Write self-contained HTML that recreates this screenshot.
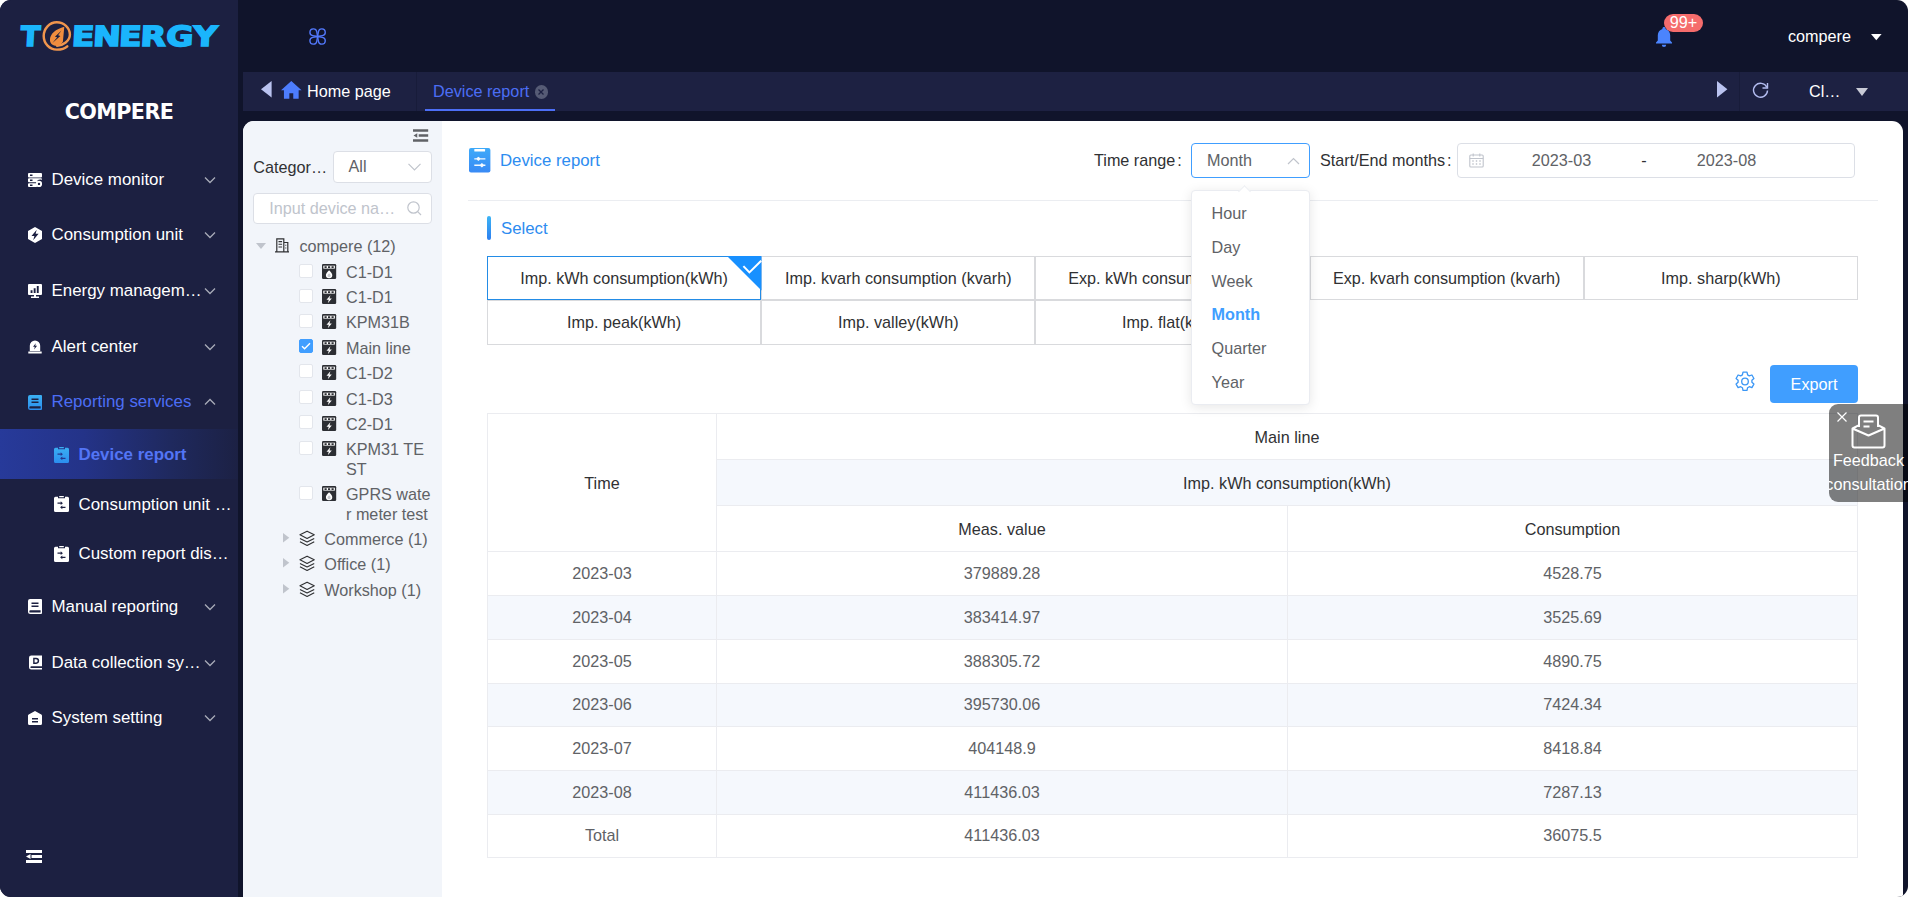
<!DOCTYPE html>
<html lang="en">
<head>
<meta charset="utf-8">
<title>Device report</title>
<style>
*{box-sizing:border-box;margin:0;padding:0}
html,body{width:1908px;height:897px;overflow:hidden;background:#fff}
body{font-family:"Liberation Sans",sans-serif;font-size:16.2px;color:#303133;position:relative}
svg{display:block;overflow:visible}
.abs{position:absolute}
#app{position:absolute;left:0;top:0;width:1908px;height:897px;background:#10142b;border-radius:11px;overflow:hidden}
#side{position:absolute;left:0;top:0;width:238px;height:897px;background:#1c2041}
.mi{position:absolute;left:0;width:238px;height:50px;color:#fff;font-size:16.9px;line-height:50px;white-space:nowrap}
.mi .ic{position:absolute;left:28px;top:18px;width:14px;height:14px}
.mi .tx{position:absolute;left:51.5px;top:0}
.mi .ch{position:absolute;left:204px;top:21px;width:12px;height:8px}
.smi{position:absolute;left:0;width:238px;height:50px;color:#fff;font-size:16.9px;line-height:50px;white-space:nowrap}
.smi .ic{position:absolute;left:54.2px;top:17px;width:15px;height:16px}
.smi .tx{position:absolute;left:78.5px;top:0}
#top{position:absolute;left:238px;top:0;width:1670px;height:72px}
#tabs{position:absolute;left:243px;top:72px;width:1665px;height:39px;background:#1d2142}
#panel{position:absolute;left:243px;top:121px;width:1660px;height:790px;background:#fff;border-radius:11px;overflow:hidden}
#tree{position:absolute;left:0;top:0;width:199px;height:790px;background:#f2f5fa}
#main{position:absolute;left:0;top:0;width:1908px;height:897px}
.tn{position:absolute;font-size:16.2px;color:#606266;white-space:nowrap;line-height:20px}
.cb{position:absolute;width:14px;height:14px;border:1px solid #e3e6ec;border-radius:2px;background:#fff}
.cb.on{background:#409eff;border-color:#409eff}
.dv{position:absolute;width:14.2px;height:15px}
.lay{position:absolute;width:16.2px;height:16.6px}
.car{position:absolute;width:0;height:0;border-left:6.4px solid #c0c4cc;border-top:4.7px solid transparent;border-bottom:4.7px solid transparent}
.opt{position:absolute;height:44px;border:1px solid #d9dadd;font-size:16.2px;color:#303133;text-align:center;line-height:42px;white-space:nowrap;background:#fff}
table{border-collapse:collapse}
#tb{position:absolute;left:487px;top:413px;width:1370px;font-size:16.2px;color:#606266;table-layout:fixed}
#tb td,#tb th{border:1px solid #ebecf0;text-align:center;font-weight:normal;padding:0}
#tb th{height:46px;color:#303133;padding-top:2px}
#tb td{height:auto}
#tb tr.s td,#tb th.s{background:#f5f8fd}
.dd{position:absolute;left:1211.6px;font-size:16.2px;color:#606266;line-height:20px;white-space:nowrap}

</style>
</head>
<body>
<div id="app">
<div id="side">
<svg class="abs" style="left:0;top:0" width="238" height="72" viewBox="0 0 238 72">
<defs><linearGradient id="lg" gradientUnits="userSpaceOnUse" x1="0" y1="25" x2="0" y2="47"><stop offset="0" stop-color="#1bb0f6"/><stop offset="1" stop-color="#1cb4fb"/></linearGradient></defs>
<g font-family="'DejaVu Sans','Liberation Sans',sans-serif" font-weight="bold" font-size="27.71" fill="#1ab5fc" stroke="#1ab5fc" stroke-width="1.6" stroke-linejoin="miter">
<text transform="translate(20.30,46.10) skewX(-3) scale(1.031,1)" x="-0.14" y="0">T</text>
<text transform="translate(0,46.10) skewX(-3) scale(1.2,1)" x="59.36 77.07 98.74 116.71 138.04 160.63" y="0">ENERGY</text>
</g>
<path d="M57 45.800C63 45.500 69.900 41 69.900 34.500A13.100 12.400 0 0 0 56.800 22.300A13.100 13.700 0 0 0 43.700 36A13.100 13.600 0 0 0 56.800 49.600C61 49.600 65 48.500 67.300 46.300" fill="none" stroke="#f0954d" stroke-width="2.450" stroke-linecap="round"/>
<path d="M64.300 26.800C56 29 49.500 34 50 40.500C50.300 44.500 54 46.200 57.500 45.800C60 45.500 61.500 43.800 62.900 41.800z" fill="#f08d3e"/>
<path d="M61.500 30.600L54.900 36.700l2.300.5L52.400 42.900l8-7-2.300-.6z" fill="#1c2041"/>
</svg>
<div class="abs" style="left:0;top:96px;width:238px;text-align:center;color:#fff;font-weight:bold;font-size:22px;line-height:32px;font-family:'DejaVu Sans','Liberation Sans',sans-serif;letter-spacing:-0.6px;transform:scaleX(.94)">COMPERE</div>

<div class="mi" style="top:155px"><svg class="ic" viewBox="0 0 14 14"><path fill="#fff" d="M1 0h12a1 1 0 0 1 1 1v2.500a1 1 0 0 1-1 1H1a1 1 0 0 1-1-1V1a1 1 0 0 1 1-1zm1 1.500v1.500h2.500V1.500zM1 5.200h12a1 1 0 0 1 1 1v.6a4 4 0 0 0-5.500 2.500H1a1 1 0 0 1-1-1V6.200a1 1 0 0 1 1-1zm1 1.400v1.500h2.500V6.600zM1 10.200h7.200a4 4 0 0 0 .8 3.800H1a1 1 0 0 1-1-1v-1.800a1 1 0 0 1 1-1zm1 1.300V13h2.500v-1.500zM11 7.800a3.100 3.100 0 1 1 0 6.200 3.100 3.100 0 0 1 0-6.200zm0 1.900a1.200 1.200 0 1 0 0 2.400 1.200 1.200 0 0 0 0-2.400z"/></svg><span class="tx">Device monitor</span><svg class="ch" viewBox="0 0 12 8"><path d="M1 1.500l5 5 5-5" fill="none" stroke="#a8abb8" stroke-width="1.300"/></svg></div>

<div class="mi" style="top:209.500px"><svg class="ic" viewBox="0 0 14 16" style="height:16px;top:17px"><path fill="#fff" d="M7 0l7 4v8l-7 4-7-4V4zM8.700 2.800L3.500 9h2.900l-1.200 4.300L10.600 6.700H7.600z"/></svg><span class="tx">Consumption unit</span><svg class="ch" viewBox="0 0 12 8"><path d="M1 1.500l5 5 5-5" fill="none" stroke="#a8abb8" stroke-width="1.300"/></svg></div>

<div class="mi" style="top:266px"><svg class="ic" viewBox="0 0 14 14"><path fill="#fff" d="M1 0h12a1 1 0 0 1 1 1v9a1 1 0 0 1-1 1H1a1 1 0 0 1-1-1V1a1 1 0 0 1 1-1zm1.600 6.300v2.700h1.900V6.300zm3.100 -2.100v4.800h1.900V4.200zm3.100-2.100v6.900h1.900V2.100zM6 11h2v1.500h3V14H3v-1.500h3z"/></svg><span class="tx">Energy managem…</span><svg class="ch" viewBox="0 0 12 8"><path d="M1 1.500l5 5 5-5" fill="none" stroke="#a8abb8" stroke-width="1.300"/></svg></div>

<div class="mi" style="top:321.500px"><svg class="ic" viewBox="0 0 14 14"><path fill="#fff" d="M7 .5a5.200 5.200 0 0 1 5.200 5.200V11H1.800V5.700A5.200 5.200 0 0 1 7 .5zm.8 2.700L5 6.800h1.800l-.7 2.700 3-3.700H7.200zM.3 11.600h13.400V13.500H.3z"/></svg><span class="tx">Alert center</span><svg class="ch" viewBox="0 0 12 8"><path d="M1 1.500l5 5 5-5" fill="none" stroke="#a8abb8" stroke-width="1.300"/></svg></div>

<div class="mi" style="top:377px;color:#4c6ef5"><svg class="ic" viewBox="0 0 14 15" style="height:15px;top:17.500px"><defs><linearGradient id="bg1" x1="0" y1="0" x2="0" y2="1"><stop offset="0" stop-color="#3bb0f2"/><stop offset="1" stop-color="#2b8ef0"/></linearGradient></defs><path fill="url(#bg1)" d="M2 0h11a1 1 0 0 1 1 1v13a1 1 0 0 1-1 1H2.500A2.500 2.500 0 0 1 0 12.500V2a2 2 0 0 1 2-2zM3.500 3.500v1.400h7V3.500zm0 3v1.400h7V6.500zM2.500 11.200a1.200 1.200 0 0 0 0 2.400H12.600v-2.400z"/></svg><span class="tx">Reporting services</span><svg class="ch" viewBox="0 0 12 8"><path d="M1 6.500l5-5 5 5" fill="none" stroke="#a8abb8" stroke-width="1.300"/></svg></div>

<div class="abs" style="left:0;top:429px;width:238px;height:50px;background:linear-gradient(90deg,#273a9a 0%,#243388 35%,#1f295e 72%,#1c2144 100%)"></div>
<div class="smi" style="top:430px;color:#5375f6;font-weight:bold"><svg class="ic" viewBox="0 0 15 16"><defs><linearGradient id="bg2" x1="0" y1="0" x2="0" y2="1"><stop offset="0" stop-color="#3bb0f2"/><stop offset="1" stop-color="#2b8ef0"/></linearGradient></defs><path fill="url(#bg2)" d="M1.500 .8H4V2.200h7V.8h2.500A1.500 1.500 0 0 1 15 2.300V14.500A1.500 1.500 0 0 1 13.500 16h-12A1.500 1.500 0 0 1 0 14.500V2.300A1.500 1.500 0 0 1 1.500 .8zM5.200 0h4.600V1.200H5.200zM3.500 6.500v1.300h3.200v1.200l2.200-1.850-2.200-1.850v1.200zm8 4.200H8.300V9.500l-2.200 1.850 2.200 1.850V12h3.200z"/></svg><span class="tx">Device report</span></div>
<div class="smi" style="top:479.500px"><svg class="ic" style="top:16.500px" viewBox="0 0 15 16"><path fill="#fff" d="M1.500 .8H4V2.200h7V.8h2.500A1.500 1.500 0 0 1 15 2.300V14.500A1.500 1.500 0 0 1 13.500 16h-12A1.500 1.500 0 0 1 0 14.500V2.300A1.500 1.500 0 0 1 1.500 .8zM5.200 0h4.600V1.200H5.200zM3.500 6.500v1.300h3.200v1.200l2.200-1.850-2.200-1.850v1.200zm8 4.200H8.300V9.500l-2.200 1.850 2.200 1.850V12h3.200z"/></svg><span class="tx">Consumption unit …</span></div>
<div class="smi" style="top:529px"><svg class="ic" viewBox="0 0 15 16"><path fill="#fff" d="M1.500 .8H4V2.200h7V.8h2.500A1.500 1.500 0 0 1 15 2.300V14.500A1.500 1.500 0 0 1 13.500 16h-12A1.500 1.500 0 0 1 0 14.500V2.300A1.500 1.500 0 0 1 1.500 .8zM5.200 0h4.600V1.200H5.200zM3.500 6.500v1.300h3.200v1.200l2.200-1.850-2.200-1.850v1.200zm8 4.200H8.300V9.500l-2.200 1.850 2.200 1.850V12h3.200z"/></svg><span class="tx">Custom report dis…</span></div>

<div class="mi" style="top:582px"><svg class="ic" viewBox="0 0 14 15" style="height:15px;top:17px"><path fill="#fff" d="M2 0h11a1 1 0 0 1 1 1v13a1 1 0 0 1-1 1H2.500A2.500 2.500 0 0 1 0 12.500V2a2 2 0 0 1 2-2zM3.500 3.500v1.400h7V3.500zm0 3v1.400h7V6.500zM2.500 11.200a1.200 1.200 0 0 0 0 2.400H12.600v-2.400z"/></svg><span class="tx">Manual reporting</span><svg class="ch" viewBox="0 0 12 8"><path d="M1 1.500l5 5 5-5" fill="none" stroke="#a8abb8" stroke-width="1.300"/></svg></div>

<div class="mi" style="top:637.500px"><svg class="ic" viewBox="0 0 14 15" style="height:15px;left:29px;width:13px;top:17.500px"><path fill="#fff" d="M2.500 0H14v11.500H2.500a1 1 0 0 0 0 2H14V15H2.500A2.500 2.500 0 0 1 0 12.500v-10A2.500 2.500 0 0 1 2.500 0zM4.500 2.500v6.500h3.200a3.250 3.250 0 0 0 0-6.500zM6 4h1.600a1.750 1.750 0 0 1 0 3.500H6z"/></svg><span class="tx">Data collection sy…</span><svg class="ch" viewBox="0 0 12 8"><path d="M1 1.500l5 5 5-5" fill="none" stroke="#a8abb8" stroke-width="1.300"/></svg></div>

<div class="mi" style="top:693px"><svg class="ic" viewBox="0 0 14 14"><path fill="#fff" d="M7 0l6.300 3.600a1.500 1.500 0 0 1 .7 1.300V12.500A1.500 1.500 0 0 1 12.500 14h-11A1.500 1.500 0 0 1 0 12.500V4.900a1.500 1.500 0 0 1 .7-1.300zM4 7v1.500h6V7zm0 3v1.500h6V10z"/></svg><span class="tx">System setting</span><svg class="ch" viewBox="0 0 12 8"><path d="M1 1.500l5 5 5-5" fill="none" stroke="#a8abb8" stroke-width="1.300"/></svg></div>

<svg class="abs" style="left:26px;top:849px" width="17" height="15" viewBox="0 0 17 15"><path fill="#fff" d="M0 1h16v3H0zM5.500 6h10.500v3H5.500zM0 11h16v3H0zM4.500 5v5L0 7.500z"/></svg>

</div>
<div id="top">
<svg class="abs" style="left:71.200px;top:27.700px" width="17.200" height="17" viewBox="0 0 17.200 17"><g transform="translate(8.600,8.500)" fill="none" stroke="#5278fb" stroke-width="1.350" stroke-linejoin="round"><path d="M0 0L-4.850-.850A3.450 3.450 0 1 1-.850-4.850z"/><path d="M0 0L-4.850-.850A3.450 3.450 0 1 1-.850-4.850z" transform="scale(-1,1)"/><path d="M0 0L-4.850-.850A3.450 3.450 0 1 1-.850-4.850z" transform="scale(1,-1)"/><path d="M0 0L-4.850-.850A3.450 3.450 0 1 1-.850-4.850z" transform="scale(-1,-1)"/></g></svg>
<svg class="abs" style="left:1417px;top:27px" width="18" height="21" viewBox="0 0 18 21"><path fill="#4b84fd" d="M9 0c.9 0 1.600.7 1.600 1.500v.4c2.800.8 4.600 3.300 4.600 6.300v5.300l1.800 2.100v1H1v-1l1.800-2.100V8.200c0-3 1.800-5.500 4.600-6.300v-.4C7.400.7 8.100 0 9 0zM6.800 17.800h4.400a2.200 2.200 0 0 1-4.400 0z"/></svg>
<div class="abs" style="left:1426px;top:14px;width:39px;height:18px;border-radius:9px;background:#f56c6c;color:#fff;font-size:16.2px;line-height:16px;text-align:center">99+</div>
<div class="abs" style="left:1550px;top:26px;color:#fff;font-size:16.2px;line-height:20px;white-space:nowrap">compere</div>
<svg class="abs" style="left:1632.900px;top:34.200px" width="10.600" height="6.300" viewBox="0 0 10.600 6.300"><path d="M0 0h10.600L5.300 6.300z" fill="#fff"/></svg>

</div>
<div id="tabs">
<svg class="abs" style="left:17.600px;top:9px" width="10.600" height="16.500" viewBox="0 0 10.600 16.500"><path d="M10.600 0v16.500L0 8.250z" fill="#bac3f0"/></svg>
<svg class="abs" style="left:37.500px;top:9.200px" width="20.600" height="17.700" viewBox="0 0 21 18"><path fill="#4d7dfd" d="M10.500 0L21 9.300h-3V18h-5.500v-5.500h-4V18H3V9.300H0z"/></svg>
<div class="abs" style="left:64px;top:9px;color:#fff;font-size:16.2px;line-height:20px;white-space:nowrap">Home page</div>
<div class="abs" style="left:173px;top:0;width:1px;height:39px;background:#181c3a"></div>
<div class="abs" style="left:190px;top:9px;color:#4c6ef5;font-size:16.2px;line-height:20px;white-space:nowrap">Device report</div>
<div class="abs" style="left:291.500px;top:13px;width:13.500px;height:13.500px;border-radius:50%;background:#565b75"></div>
<svg class="abs" style="left:295.250px;top:16.750px" width="6" height="6" viewBox="0 0 6 6"><path d="M.5.500l5 5M5.500.500l-5 5" stroke="#1d2142" stroke-width="1.300" fill="none"/></svg>
<div class="abs" style="left:182px;top:37px;width:130px;height:2px;background:#4c6ef5"></div>
<svg class="abs" style="left:1474px;top:9.200px" width="10.400" height="16.400" viewBox="0 0 10.400 16.400"><path d="M0 0v16.400L10.400 8.200z" fill="#bac3f0"/></svg>
<div class="abs" style="left:1496px;top:0;width:1px;height:39px;background:#181c3a"></div>
<svg class="abs" style="left:1509px;top:10.300px" width="17" height="17" viewBox="0 0 17 17"><path d="M14.800 5.200A7 7 0 1 0 15.500 8.500" fill="none" stroke="#b3bcf0" stroke-width="1.400"/><path d="M15.500 1v5h-5" fill="none" stroke="#b3bcf0" stroke-width="1.400"/></svg>
<div class="abs" style="left:1566px;top:9px;color:#fff;font-size:16.2px;line-height:20px;white-space:nowrap">Cl…</div>
<div class="abs" style="left:1613px;top:15.700px;width:0;height:0;border-top:8px solid #c8cad6;border-left:6px solid transparent;border-right:6px solid transparent"></div>

</div>
<div id="panel">
<div id="tree">
<svg class="abs" style="left:169.5px;top:7.5px" width="15.2" height="13" viewBox="0 0 16 13"><path fill="#606266" d="M0 0h16v2.600H0zM6 5.200h10v2.600H6zM0 10.400h16V13H0zM4.500 4v5L.5 6.500z"/></svg>
<div class="abs" style="left:10.3px;top:36px;font-size:16.2px;line-height:20px;color:#303133;white-space:nowrap">Categor…</div>
<div class="abs" style="left:90px;top:30px;width:98.500px;height:31.500px;border:1px solid #dcdfe6;border-radius:4px;background:#fff"></div>
<div class="abs" style="left:105.5px;top:35px;font-size:16.2px;line-height:20px;color:#606266">All</div>
<svg class="abs" style="left:165.3px;top:42.2px" width="13" height="8" viewBox="0 0 13 8"><path d="M.5 .8l6 6.200 6-6.200" fill="none" stroke="#c0c4cc" stroke-width="1.200"/></svg>
<div class="abs" style="left:10px;top:72px;width:178.500px;height:31px;border:1px solid #dcdfe6;border-radius:4px;background:#fff"></div>
<div class="abs" style="left:26.3px;top:76.5px;font-size:16.2px;line-height:20px;color:#c0c4cc;white-space:nowrap">Input device na…</div>
<svg class="abs" style="left:164.2px;top:79.8px" width="15" height="15" viewBox="0 0 15 15"><circle cx="6.500" cy="6.500" r="5.700" fill="none" stroke="#c0c4cc" stroke-width="1.200"/><path d="M10.700 10.700L14 14" stroke="#c0c4cc" stroke-width="1.200" fill="none"/></svg>
<svg class="abs" style="left:12.8px;top:122px" width="10" height="6" viewBox="0 0 10 6"><path d="M0 0h10L5 6z" fill="#c0c4cc"/></svg>
<svg class="abs" style="left:32px;top:116.7px" width="14" height="14.500" viewBox="0 0 14 14.500"><g fill="none" stroke="#303133" stroke-width="1.200"><path d="M1.800 13.800V.8h7v13M8.800 4.500h4v9.300M0 13.900h14"/><path d="M3.500 3.600h3.600M3.500 6.300h3.600M3.500 9h3.600M10.300 7.300h1M10.300 10h1" stroke-width="1.100"/></g></svg>
<div class="tn" style="left:56.5px;top:115px">compere (12)</div>
<div class="cb" style="left:55.7px;top:142.5px"></div>
<svg class="dv" style="left:79.0px;top:142.5px" viewBox="0 0 14.200 15"><rect x="0" y="0" width="14.200" height="15" rx="1.300" fill="#2c2e33"/><rect x="1.300" y="1.700" width="11.600" height="2.900" fill="#fff"/><path fill="#2c2e33" d="M2.500 2.300h2.200v1.700H2.500zM6 2.300h2.200v1.700H6zM9.500 2.300h2.200v1.700H9.500z"/><path fill="#fff" d="M7.100 6.200c1.700 1.900 3.200 3.200 3.200 4.800a3.200 3.200 0 0 1-6.400 0c0-1.600 1.500-2.900 3.200-4.800z"/><path fill="#c9cbd0" d="M7.100 9.200c.9 1 1.600 1.600 1.600 2.400a1.600 1.600 0 0 1-3.200 0c0-.8.700-1.400 1.600-2.400z"/></svg>
<div class="tn" style="left:103px;top:141px">C1-D1</div>
<div class="cb" style="left:55.7px;top:167.5px"></div>
<svg class="dv" style="left:79.0px;top:168.0px" viewBox="0 0 14.200 15"><rect x="0" y="0" width="14.200" height="15" rx="1.300" fill="#2c2e33"/><rect x="1.300" y="1.700" width="11.600" height="2.900" fill="#fff"/><path fill="#2c2e33" d="M2.500 2.300h2.200v1.700H2.500zM6 2.300h2.200v1.700H6zM9.500 2.300h2.200v1.700H9.500z"/><path fill="#fff" d="M8.400 6.300L4.500 10.700h2.300l-1 3.500L9.800 9.600H7.500z"/></svg>
<div class="tn" style="left:103px;top:166px">C1-D1</div>
<div class="cb" style="left:55.7px;top:192.5px"></div>
<svg class="dv" style="left:79.0px;top:193.3px" viewBox="0 0 14.200 15"><rect x="0" y="0" width="14.200" height="15" rx="1.300" fill="#2c2e33"/><rect x="1.300" y="1.700" width="11.600" height="2.900" fill="#fff"/><path fill="#2c2e33" d="M2.500 2.300h2.200v1.700H2.500zM6 2.300h2.200v1.700H6zM9.500 2.300h2.200v1.700H9.500z"/><path fill="#fff" d="M8.400 6.300L4.500 10.700h2.300l-1 3.500L9.800 9.600H7.500z"/></svg>
<div class="tn" style="left:103px;top:191px">KPM31B</div>
<div class="cb on" style="left:55.7px;top:218.3px"></div><svg class="abs" style="left:57.7px;top:221.3px" width="10" height="8" viewBox="0 0 10 8"><path d="M1 4.200l2.600 2.600L9 1.200" fill="none" stroke="#fff" stroke-width="1.400"/></svg>
<svg class="dv" style="left:79.0px;top:218.7px" viewBox="0 0 14.200 15"><rect x="0" y="0" width="14.200" height="15" rx="1.300" fill="#2c2e33"/><rect x="1.300" y="1.700" width="11.600" height="2.900" fill="#fff"/><path fill="#2c2e33" d="M2.500 2.300h2.200v1.700H2.500zM6 2.300h2.200v1.700H6zM9.500 2.300h2.200v1.700H9.500z"/><path fill="#fff" d="M8.400 6.300L4.500 10.700h2.300l-1 3.500L9.800 9.600H7.500z"/></svg>
<div class="tn" style="left:103px;top:217px">Main line</div>
<div class="cb" style="left:55.7px;top:243.3px"></div>
<svg class="dv" style="left:79.0px;top:244.0px" viewBox="0 0 14.200 15"><rect x="0" y="0" width="14.200" height="15" rx="1.300" fill="#2c2e33"/><rect x="1.300" y="1.700" width="11.600" height="2.900" fill="#fff"/><path fill="#2c2e33" d="M2.500 2.300h2.200v1.700H2.500zM6 2.300h2.200v1.700H6zM9.500 2.300h2.200v1.700H9.500z"/><path fill="#fff" d="M8.400 6.300L4.500 10.700h2.300l-1 3.500L9.800 9.600H7.500z"/></svg>
<div class="tn" style="left:103px;top:242px">C1-D2</div>
<div class="cb" style="left:55.7px;top:269.2px"></div>
<svg class="dv" style="left:79.0px;top:269.6px" viewBox="0 0 14.200 15"><rect x="0" y="0" width="14.200" height="15" rx="1.300" fill="#2c2e33"/><rect x="1.300" y="1.700" width="11.600" height="2.900" fill="#fff"/><path fill="#2c2e33" d="M2.500 2.300h2.200v1.700H2.500zM6 2.300h2.200v1.700H6zM9.500 2.300h2.200v1.700H9.500z"/><path fill="#fff" d="M8.400 6.300L4.500 10.700h2.300l-1 3.500L9.800 9.600H7.500z"/></svg>
<div class="tn" style="left:103px;top:268px">C1-D3</div>
<div class="cb" style="left:55.7px;top:294.2px"></div>
<svg class="dv" style="left:79.0px;top:295.0px" viewBox="0 0 14.200 15"><rect x="0" y="0" width="14.200" height="15" rx="1.300" fill="#2c2e33"/><rect x="1.300" y="1.700" width="11.600" height="2.900" fill="#fff"/><path fill="#2c2e33" d="M2.500 2.300h2.200v1.700H2.500zM6 2.300h2.200v1.700H6zM9.500 2.300h2.200v1.700H9.500z"/><path fill="#fff" d="M8.400 6.300L4.500 10.700h2.300l-1 3.500L9.800 9.600H7.500z"/></svg>
<div class="tn" style="left:103px;top:293px">C2-D1</div>
<div class="cb" style="left:55.7px;top:320.0px"></div>
<svg class="dv" style="left:79.0px;top:320.2px" viewBox="0 0 14.200 15"><rect x="0" y="0" width="14.200" height="15" rx="1.300" fill="#2c2e33"/><rect x="1.300" y="1.700" width="11.600" height="2.900" fill="#fff"/><path fill="#2c2e33" d="M2.500 2.300h2.200v1.700H2.500zM6 2.300h2.200v1.700H6zM9.500 2.300h2.200v1.700H9.500z"/><path fill="#fff" d="M8.400 6.300L4.500 10.700h2.300l-1 3.500L9.800 9.600H7.500z"/></svg>
<div class="tn" style="left:103px;top:318px">KPM31 TE<br>ST</div>
<div class="cb" style="left:55.7px;top:364.6px"></div>
<svg class="dv" style="left:79.0px;top:364.8px" viewBox="0 0 14.200 15"><rect x="0" y="0" width="14.200" height="15" rx="1.300" fill="#2c2e33"/><rect x="1.300" y="1.700" width="11.600" height="2.900" fill="#fff"/><path fill="#2c2e33" d="M2.500 2.300h2.200v1.700H2.500zM6 2.300h2.200v1.700H6zM9.500 2.300h2.200v1.700H9.500z"/><path fill="#fff" d="M7.100 6.200c1.700 1.900 3.200 3.200 3.200 4.800a3.200 3.200 0 0 1-6.400 0c0-1.600 1.500-2.900 3.200-4.800z"/><path fill="#c9cbd0" d="M7.100 9.200c.9 1 1.600 1.600 1.600 2.400a1.600 1.600 0 0 1-3.200 0c0-.8.700-1.400 1.600-2.400z"/></svg>
<div class="tn" style="left:103px;top:362.5px">GPRS wate<br>r meter test</div>
<svg class="abs" style="left:40px;top:412.4px" width="6.300" height="9.400" viewBox="0 0 6.300 9.400"><path d="M0 0l6.300 4.700L0 9.400z" fill="#c0c4cc"/></svg>
<svg class="lay" style="left:56.0px;top:409.0px" viewBox="0 0 17 17"><g fill="none" stroke="#303133" stroke-width="1.200" stroke-linejoin="round"><path d="M8.500 1L16 4.800 8.500 8.600 1 4.800z"/><path d="M1 8.600l7.500 3.800L16 8.600"/><path d="M1 12.200L8.500 16 16 12.200"/></g></svg>
<div class="tn" style="left:81.3px;top:408px">Commerce (1)</div>
<svg class="abs" style="left:40px;top:437.4px" width="6.300" height="9.400" viewBox="0 0 6.300 9.400"><path d="M0 0l6.300 4.700L0 9.400z" fill="#c0c4cc"/></svg>
<svg class="lay" style="left:56.0px;top:434.0px" viewBox="0 0 17 17"><g fill="none" stroke="#303133" stroke-width="1.200" stroke-linejoin="round"><path d="M8.500 1L16 4.800 8.500 8.600 1 4.800z"/><path d="M1 8.600l7.500 3.800L16 8.600"/><path d="M1 12.200L8.500 16 16 12.200"/></g></svg>
<div class="tn" style="left:81.3px;top:432.5px">Office (1)</div>
<svg class="abs" style="left:40px;top:463.4px" width="6.300" height="9.400" viewBox="0 0 6.300 9.400"><path d="M0 0l6.300 4.700L0 9.400z" fill="#c0c4cc"/></svg>
<svg class="lay" style="left:56.0px;top:460.1px" viewBox="0 0 17 17"><g fill="none" stroke="#303133" stroke-width="1.200" stroke-linejoin="round"><path d="M8.500 1L16 4.800 8.500 8.600 1 4.800z"/><path d="M1 8.600l7.500 3.800L16 8.600"/><path d="M1 12.200L8.500 16 16 12.200"/></g></svg>
<div class="tn" style="left:81.3px;top:459px">Workshop (1)</div>
</div>
</div>
<div id="main">
<svg class="abs" style="left:468.800px;top:148px" width="21.400" height="24.600" viewBox="0 0 21.400 24.600"><defs><linearGradient id="tg" x1="0" y1="0" x2="0" y2="1"><stop offset="0" stop-color="#3eaaf9"/><stop offset="1" stop-color="#398af5"/></linearGradient></defs><rect x="0" y="0" width="21.400" height="24.600" rx="2" fill="url(#tg)"/><rect x="5.300" y=".9" width="10.800" height="2.500" rx=".5" fill="#fff"/><path fill="#fff" opacity=".95" d="M5.300 10.200h11.100v1.300H5.300zM9.400 8.700l2.600 2.150-2.600 2.150-2.600-2.150zM5.300 16.600h11.100v1.300H5.300zM12.900 15.100l2.600 2.150-2.600 2.150-2.600-2.150z"/></svg>
<div class="abs" style="left:500px;top:151px;font-size:16.8px;line-height:20px;color:#2d8cf0;white-space:nowrap">Device report</div>
<div class="abs" style="left:467.500px;top:199.500px;width:1410.500px;height:1px;background:#ebedf1"></div>
<div class="abs" style="left:1094px;top:150px;font-size:16.2px;line-height:20px;color:#303133;white-space:nowrap">Time range<span style="margin-left:2px">:</span></div>
<div class="abs" style="left:1191px;top:143px;width:119px;height:35px;border:1px solid #409eff;border-radius:4px;background:#fff"></div>
<div class="abs" style="left:1207px;top:150px;font-size:16.2px;line-height:20px;color:#606266">Month</div>
<svg class="abs" style="left:1286.500px;top:156.500px" width="13" height="8" viewBox="0 0 13 8"><path d="M1 7l5.500-5.500L12 7" fill="none" stroke="#c0c4cc" stroke-width="1.200"/></svg>
<div class="abs" style="left:1320px;top:150px;font-size:16.2px;line-height:20px;color:#303133;white-space:nowrap">Start/End months<span style="margin-left:2px">:</span></div>
<div class="abs" style="left:1457px;top:143px;width:398px;height:35px;border:1px solid #dcdfe6;border-radius:4px;background:#fff"></div>
<svg class="abs" style="left:1468.500px;top:153px" width="15" height="15" viewBox="0 0 15 15"><g fill="none" stroke="#c0c4cc" stroke-width="1.100"><rect x=".8" y="2" width="13.400" height="12" rx="1"/><path d="M.8 5.500h13.400M4.200.5v3M10.800.5v3"/><path d="M3.300 8h1.400M6.800 8h1.400M10.300 8h1.400M3.300 11h1.400M6.800 11h1.400M10.300 11h1.400" stroke-width="1.300"/></g></svg>
<div class="abs" style="left:1492px;top:150px;width:139px;text-align:center;font-size:16.2px;line-height:20px;color:#606266">2023-03</div>
<div class="abs" style="left:1634px;top:150px;width:20px;text-align:center;font-size:16.2px;line-height:20px;color:#303133">-</div>
<div class="abs" style="left:1657px;top:150px;width:139px;text-align:center;font-size:16.2px;line-height:20px;color:#606266">2023-08</div>
<div class="abs" style="left:487px;top:216px;width:4px;height:24px;border-radius:2px;background:linear-gradient(180deg,#3cb4f5,#2d7ff0)"></div>
<div class="abs" style="left:501px;top:219px;font-size:16.8px;line-height:20px;color:#2d8cf0">Select</div>
<div class="opt" style="left:487.0px;top:256px;width:274.2px;height:44px;line-height:42px">Imp. kWh consumption(kWh)</div>
<div class="opt" style="left:761.2px;top:256px;width:274.2px;height:44px;line-height:42px">Imp. kvarh consumption (kvarh)</div>
<div class="opt" style="left:1035.4px;top:256px;width:274.2px;height:44px;line-height:42px">Exp. kWh consumption(kWh)</div>
<div class="opt" style="left:1309.6px;top:256px;width:274.2px;height:44px;line-height:42px">Exp. kvarh consumption (kvarh)</div>
<div class="opt" style="left:1583.8px;top:256px;width:274.2px;height:44px;line-height:42px">Imp. sharp(kWh)</div>
<div class="opt" style="left:487.0px;top:300px;width:274.2px;height:44.500px;line-height:43.500px">Imp. peak(kWh)</div>
<div class="opt" style="left:761.2px;top:300px;width:274.2px;height:44.500px;line-height:43.500px">Imp. valley(kWh)</div>
<div class="opt" style="left:1035.4px;top:300px;width:274.2px;height:44.500px;line-height:43.500px">Imp. flat(kWh)</div>
<div class="abs" style="left:487px;top:256px;width:274.2px;height:44px;border:1.500px solid #238ce6;pointer-events:none"></div>
<svg class="abs" style="left:727px;top:256px" width="34.500" height="34.500" viewBox="0 0 34.500 34.500"><path d="M0 0h34.500v34.500z" fill="#1890ff"/><path d="M16.400 10.100l6 6.300L34.200 4.700" fill="none" stroke="#fff" stroke-width="2"/></svg>
<svg class="abs" style="left:1734px;top:370.700px" width="22" height="22" viewBox="0 0 22 22"><g fill="none" stroke="#3a96f5" stroke-width="1.300" stroke-linejoin="round"><path d="M9 1.200h4l.6 2.700 1.700 1 2.600-.9 2 3.500-2 1.800v2l2 1.800-2 3.500-2.600-.9-1.700 1-.6 2.700H9l-.6-2.700-1.700-1-2.600.9-2-3.500 2-1.800v-2l-2-1.800 2-3.500 2.600.9 1.700-1z"/><circle cx="11" cy="10.500" r="3.300"/></g></svg>
<div class="abs" style="left:1770px;top:365px;width:88px;height:38px;border-radius:4px;background:#409eff;color:#fff;font-size:16.2px;line-height:38px;text-align:center">Export</div>
<table id="tb"><colgroup><col style="width:229px"><col style="width:571px"><col style="width:570px"></colgroup><thead><tr><th rowspan="3">Time</th><th colspan="2">Main line</th></tr><tr><th colspan="2" class="s">Imp. kWh consumption(kWh)</th></tr><tr><th>Meas. value</th><th>Consumption</th></tr></thead><tbody><tr style="height:44px"><td>2023-03</td><td>379889.28</td><td>4528.75</td></tr><tr class="s" style="height:44px"><td>2023-04</td><td>383414.97</td><td>3525.69</td></tr><tr style="height:43.5px"><td>2023-05</td><td>388305.72</td><td>4890.75</td></tr><tr class="s" style="height:43.5px"><td>2023-06</td><td>395730.06</td><td>7424.34</td></tr><tr style="height:44px"><td>2023-07</td><td>404148.9</td><td>8418.84</td></tr><tr class="s" style="height:43.5px"><td>2023-08</td><td>411436.03</td><td>7287.13</td></tr><tr style="height:43.5px"><td>Total</td><td>411436.03</td><td>36075.5</td></tr></tbody></table>
<div class="abs" style="left:1191px;top:190px;width:119px;height:215px;background:#fff;border:1px solid #eaecf1;border-radius:4px;box-shadow:0 2px 12px rgba(0,0,0,.1)"></div>
<div class="abs" style="left:1239.500px;top:186.500px;width:9px;height:9px;background:#fff;border-left:1px solid #eceef2;border-top:1px solid #eceef2;transform:rotate(45deg)"></div>
<div class="dd" style="top:203px">Hour</div>
<div class="dd" style="top:237px">Day</div>
<div class="dd" style="top:271px">Week</div>
<div class="dd" style="top:303.5px;color:#409eff;font-weight:bold">Month</div>
<div class="dd" style="top:338px">Quarter</div>
<div class="dd" style="top:372px">Year</div>
<div class="abs" style="left:1829px;top:404px;width:79px;height:98px;background:rgba(0,0,0,.5);border-radius:9px 0 0 9px;overflow:hidden"><div class="abs" style="left:-10px;top:44px;width:99px;text-align:center;color:#fff;font-size:16.2px;line-height:24px;white-space:nowrap">Feedback<br>consultation</div></div>
<svg class="abs" style="left:1836.500px;top:412px" width="10" height="10" viewBox="0 0 10 10"><path d="M.5.500l9 9M9.500.500l-9 9" stroke="#fff" stroke-width="1.200" fill="none"/></svg>
<svg class="abs" style="left:1850.500px;top:413.500px" width="35" height="35" viewBox="0 0 35 35"><g fill="none" stroke="#fff" stroke-width="2" stroke-linejoin="round"><path d="M8 13V3.500a2 2 0 0 1 2-2h15a2 2 0 0 1 2 2V13"/><path d="M1.500 14.500L8 11.200M33.500 14.500L27 11.200M1.500 14.500v17a2 2 0 0 0 2 2h28a2 2 0 0 0 2-2v-17L17.500 21.500z"/><path d="M12.500 7.500h10M12.500 12.500h6" stroke-width="2.200"/></g></svg>
</div>
</div>
</body>
</html>
